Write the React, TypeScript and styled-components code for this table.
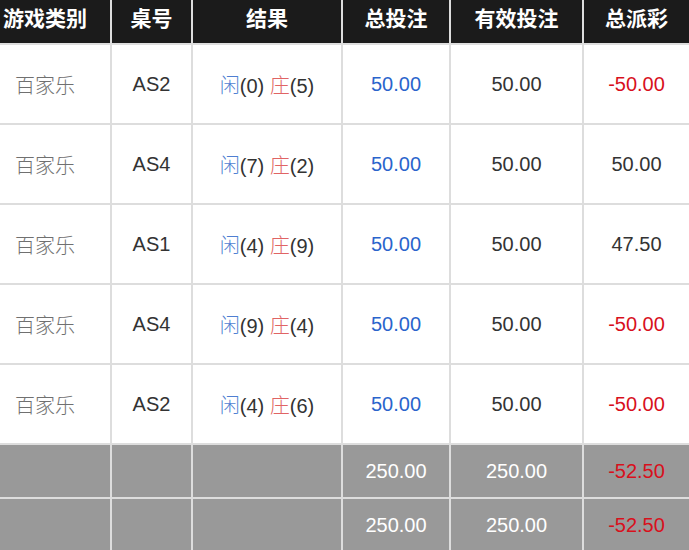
import React from 'react';
import styled, { createGlobalStyle } from 'styled-components';

const GlobalStyle = createGlobalStyle`
  html, body {
    margin: 0;
    padding: 0;
    background: #fff;
    overflow: hidden;
  }
`;

const Table = styled.table`
  width: 689px;
  table-layout: fixed;
  border-collapse: collapse;
  font-family: "Liberation Sans", "Noto Sans CJK SC", Arial, sans-serif;
  font-size: 20px;
  color: #333;
`;

const HeadCell = styled.th<{ $first?: boolean }>`
  height: 44px;
  box-sizing: border-box;
  padding: 0 ${p => (p.$first ? '20px' : '0')} 9px 0;
  background: #1b1b1b;
  color: #fff;
  font-family: "Noto Sans CJK SC", sans-serif;
  font-weight: 700;
  font-size: 21px;
  line-height: 26px;
  text-align: center;
  white-space: nowrap;
  border-left: 2px solid #ddd;
  &:first-child {
    border-left: none;
  }
`;

const Row = styled.tr<{ $total?: boolean }>`
  background: ${p => (p.$total ? '#999' : '#fff')};
  color: ${p => (p.$total ? '#fff' : '#333')};
`;

const Cell = styled.td<{ $total?: boolean; $first?: boolean }>`
  height: ${p => (p.$total ? '54px' : '80px')};
  box-sizing: border-box;
  padding: 0 ${p => (p.$first ? '20px' : '0')} 0 0;
  text-align: center;
  white-space: nowrap;
  border-left: 2px solid #ddd;
  border-top: 2px solid #ddd;
  &:first-child {
    border-left: none;
  }
`;

const Game = styled.span`
  font-family: "Noto Sans CJK SC", sans-serif;
  font-weight: 300;
  color: #707070;
`;

const Amount = styled.span<{ $tone?: 'blue' | 'red' | 'plain' }>`
  color: ${p =>
    p.$tone === 'blue' ? '#2a64cc' : p.$tone === 'red' ? '#d8101c' : 'inherit'};
`;

const Side = styled.span<{ $banker?: boolean }>`
  font-family: "Noto Sans CJK SC", sans-serif;
  font-weight: 300;
  color: ${p => (p.$banker ? '#e06464' : '#4f7fd2')};
`;

const rows = [
  { table: 'AS2', p: 0, b: 5, win: '-50.00' },
  { table: 'AS4', p: 7, b: 2, win: '50.00' },
  { table: 'AS1', p: 4, b: 9, win: '47.50' },
  { table: 'AS4', p: 9, b: 4, win: '-50.00' },
  { table: 'AS2', p: 4, b: 6, win: '-50.00' },
];

const widths = [111, 81, 150, 108, 133, 106];
const headers = ['游戏类别', '桌号', '结果', '总投注', '有效投注', '总派彩'];

export default function App() {
  return (
    <>
      <GlobalStyle />
      <Table>
        <colgroup>
          {widths.map((w, i) => (
            <col key={i} style={{ width: w }} />
          ))}
        </colgroup>
        <thead>
          <tr>
            {headers.map((h, i) => (
              <HeadCell key={h} $first={i === 0}>
                {h}
              </HeadCell>
            ))}
          </tr>
        </thead>
        <tbody>
          {rows.map((r, i) => (
            <Row key={i}>
              <Cell $first>
                <Game>百家乐</Game>
              </Cell>
              <Cell>{r.table}</Cell>
              <Cell>
                <Side>闲</Side>({r.p}) <Side $banker>庄</Side>({r.b})
              </Cell>
              <Cell>
                <Amount $tone="blue">50.00</Amount>
              </Cell>
              <Cell>50.00</Cell>
              <Cell>
                <Amount $tone={r.win.startsWith('-') ? 'red' : 'plain'}>{r.win}</Amount>
              </Cell>
            </Row>
          ))}
          {[0, 1].map(i => (
            <Row key={`t${i}`} $total>
              <Cell $total $first />
              <Cell $total />
              <Cell $total />
              <Cell $total>250.00</Cell>
              <Cell $total>250.00</Cell>
              <Cell $total>
                <Amount $tone="red">-52.50</Amount>
              </Cell>
            </Row>
          ))}
        </tbody>
      </Table>
    </>
  );
}
